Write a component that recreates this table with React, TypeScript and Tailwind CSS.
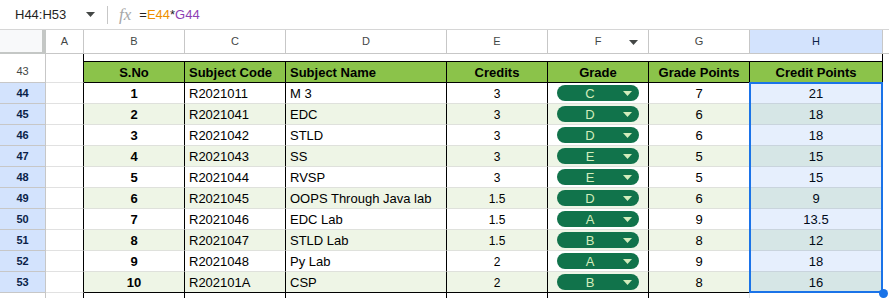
import React from "react";

type Row = [string, string, string, string, string, string, string];

const rows: Row[] = [
  ["1", "R2021011", "M 3", "3", "C", "7", "21"],
  ["2", "R2021041", "EDC", "3", "D", "6", "18"],
  ["3", "R2021042", "STLD", "3", "D", "6", "18"],
  ["4", "R2021043", "SS", "3", "E", "5", "15"],
  ["5", "R2021044", "RVSP", "3", "E", "5", "15"],
  ["6", "R2021045", "OOPS Through Java lab", "1.5", "D", "6", "9"],
  ["7", "R2021046", "EDC Lab", "1.5", "A", "9", "13.5"],
  ["8", "R2021047", "STLD Lab", "1.5", "B", "8", "12"],
  ["9", "R2021048", "Py Lab", "2", "A", "9", "18"],
  ["10", "R202101A", "CSP", "2", "B", "8", "16"],
];

function Caret({ className }: { className: string }) {
  return (
    <svg width="9" height="5" viewBox="0 0 9 5" className={className}>
      <path d="M0 0h9L4.5 5z" fill="currentColor" />
    </svg>
  );
}

function Chip({ grade }: { grade: string }) {
  return (
    <div className="mx-[9px] flex h-[16px] w-[82px] items-center rounded-full bg-[#11734b] text-[13px] leading-none text-[#d4edbc]">
      <span className="w-[66px] text-center">{grade}</span>
      <Caret className="text-[#d4edbc]" />
    </div>
  );
}

export default function App() {
  return (
    <div className="flex h-[298px] w-[889px] flex-col overflow-hidden bg-white font-['Liberation_Sans',Arial,sans-serif] text-black">
      {/* formula bar */}
      <div className="flex h-[30px] shrink-0 items-center border-b border-[#d6d6d6]">
        <div className="flex w-[107px] items-center pl-[15px] pr-[12px] text-[13px] text-[#1f1f1f]">
          <span>H44:H53</span>
          <Caret className="ml-auto text-[#444746]" />
        </div>
        <div className="h-[18px] w-px bg-[#c7c7c7]" />
        <span className="ml-[11px] font-['Liberation_Serif',serif] text-[17px] italic leading-none text-[#a7a7a7]">
          fx
        </span>
        <span className="ml-[8px] text-[13px] text-[#1f1f1f]">
          =<span className="text-[#ef8f00]">E44</span>*<span className="text-[#8e3fb5]">G44</span>
        </span>
      </div>

      {/* column headers */}
      <div className="flex h-[24px] shrink-0 text-[11px] text-[#444746]">
        <div className="w-[46px] shrink-0 border-b-2 border-r-4 border-[#c4c7c5] bg-[#f8f9fa]" />
        <div className="flex w-[38px] shrink-0 items-center justify-center border-b border-r border-[#c7c7c7]">A</div>
        <div className="flex w-[101px] shrink-0 items-center justify-center border-b border-r border-[#c7c7c7]">B</div>
        <div className="flex w-[101px] shrink-0 items-center justify-center border-b border-r border-[#c7c7c7]">C</div>
        <div className="flex w-[161px] shrink-0 items-center justify-center border-b border-r border-[#c7c7c7]">D</div>
        <div className="flex w-[101px] shrink-0 items-center justify-center border-b border-r border-[#c7c7c7]">E</div>
        <div className="relative flex w-[101px] shrink-0 items-center justify-center border-b border-r border-[#c7c7c7]">
          F
          <Caret className="absolute right-[10px] top-[10px] text-[#444746]" />
        </div>
        <div className="flex w-[101px] shrink-0 items-center justify-center border-b border-r border-[#c7c7c7]">G</div>
        <div className="flex w-[133px] shrink-0 items-center justify-center border-b border-r border-[#c7c7c7] bg-[#d3e3fd] text-[#0b1f48]">
          H
        </div>
        <div className="flex-1 border-b border-[#c7c7c7]" />
      </div>

      {/* row 42 (partial) */}
      <div className="flex h-[7px] shrink-0">
        <div className="w-[46px] shrink-0 border-r border-[#c7c7c7]" />
        <div className="w-[38px] shrink-0 border-r border-r-black" />
        <div className="w-[799px] shrink-0 border-r border-r-black" />
        <div className="flex-1" />
      </div>

      {/* row 43 header */}
      <div className="flex h-[22px] shrink-0 text-[13px] font-bold leading-none">
        <div className="flex w-[46px] shrink-0 items-center justify-center border-b border-r border-[#c7c7c7] text-[11px] font-normal text-[#444746]">
          43
        </div>
        <div className="w-[38px] shrink-0 border-b border-r border-b-[#e1e1e1] border-r-black" />
        <div className="flex w-[101px] shrink-0 items-center justify-center border-y border-r border-black bg-[#8bc34a]">S.No</div>
        <div className="flex w-[101px] shrink-0 items-center border-y border-r border-black bg-[#8bc34a] pl-[4px]">Subject Code</div>
        <div className="flex w-[161px] shrink-0 items-center border-y border-r border-black bg-[#8bc34a] pl-[4px]">Subject Name</div>
        <div className="flex w-[101px] shrink-0 items-center justify-center border-y border-r border-black bg-[#8bc34a]">Credits</div>
        <div className="flex w-[101px] shrink-0 items-center justify-center border-y border-r border-black bg-[#8bc34a]">Grade</div>
        <div className="flex w-[101px] shrink-0 items-center justify-center border-y border-r border-black bg-[#8bc34a]">Grade Points</div>
        <div className="flex w-[133px] shrink-0 items-center justify-center border-y border-r border-black bg-[#8bc34a]">Credit Points</div>
        <div className="flex-1" />
      </div>

      {/* data rows */}
      <div className="relative shrink-0">
        {rows.map((r, i) => {
          const band = i % 2 === 1;
          const last = i === rows.length - 1;
          const bg = band ? "bg-[#eef5e6]" : "bg-white";
          const bb = last ? "border-b-black" : "border-b-[#dfe1dc]";
          return (
            <div key={i} className="flex h-[21px] text-[13px] leading-none">
              <div className="flex w-[46px] shrink-0 items-center justify-center border-b border-r border-[#c7c7c7] bg-[#d3e3fd] text-[11px] font-bold text-[#0b1f48]">
                {44 + i}
              </div>
              <div className="w-[38px] shrink-0 border-b border-r border-b-[#e1e1e1] border-r-black" />
              <div className={`flex w-[101px] shrink-0 items-center justify-center border-b border-r border-r-black font-bold ${bb} ${bg}`}>
                {r[0]}
              </div>
              <div className={`flex w-[101px] shrink-0 items-center border-b border-r border-r-black pl-[4px] ${bb} ${bg}`}>
                {r[1]}
              </div>
              <div className={`flex w-[161px] shrink-0 items-center border-b border-r border-r-black pl-[4px] ${bb} ${bg}`}>
                {r[2]}
              </div>
              <div className={`flex w-[101px] shrink-0 items-center justify-center border-b border-r border-r-black pt-[2px] text-[12px] ${bb} ${bg}`}>
                {r[3]}
              </div>
              <div className={`flex w-[101px] shrink-0 items-center border-b border-r border-r-black ${bb} ${bg}`}>
                <Chip grade={r[4]} />
              </div>
              <div className={`flex w-[101px] shrink-0 items-center justify-center border-b border-r border-r-black ${bb} ${bg}`}>
                {r[5]}
              </div>
              <div className={`flex w-[133px] shrink-0 items-center justify-center border-b border-r border-r-black ${bb} ${bg}`}>
                {r[6]}
              </div>
              <div className="flex-1" />
            </div>
          );
        })}
        {/* selection overlay */}
        <div className="pointer-events-none absolute left-[749px] top-[-1px] h-[211px] w-[134px] border-2 border-[#1a73e8] bg-[#0e65eb]/10">
          <div className="absolute -bottom-[7px] -right-[7px] h-[9px] w-[9px] rounded-full bg-[#1a73e8]" />
        </div>
      </div>

      {/* row 54 (partial) */}
      <div className="flex flex-1">
        <div className="w-[46px] shrink-0 border-r border-[#c7c7c7]" />
        <div className="w-[38px] shrink-0 border-r border-r-black" />
        <div className="w-[101px] shrink-0 border-r border-r-black" />
        <div className="w-[101px] shrink-0 border-r border-r-black" />
        <div className="w-[161px] shrink-0 border-r border-r-black" />
        <div className="w-[101px] shrink-0 border-r border-r-black" />
        <div className="w-[101px] shrink-0 border-r border-r-black" />
        <div className="w-[101px] shrink-0 border-r border-r-[#e1e1e1]" />
        <div className="w-[133px] shrink-0 border-r border-r-[#e1e1e1]" />
        <div className="flex-1" />
      </div>
    </div>
  );
}
